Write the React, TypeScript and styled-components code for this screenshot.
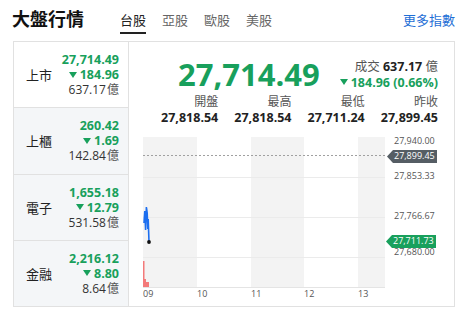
import styled, { createGlobalStyle } from 'styled-components'

const GREEN = '#18a05c'

const GlobalStyle = createGlobalStyle`
  body {
    margin: 0;
    background: #fff;
    font-family: "Open Sans", "Noto Sans CJK TC", sans-serif;
    color: #222;
  }
`

const markets = [
  { name: '上市', value: '27,714.49', change: '184.96', volume: '637.17' },
  { name: '上櫃', value: '260.42', change: '1.69', volume: '142.84' },
  { name: '電子', value: '1,655.18', change: '12.79', volume: '531.58' },
  { name: '金融', value: '2,216.12', change: '8.80', volume: '8.64' },
]

const stats = [
  { label: '開盤', value: '27,818.54' },
  { label: '最高', value: '27,818.54' },
  { label: '最低', value: '27,711.24' },
  { label: '昨收', value: '27,899.45' },
]

const tabs = ['台股', '亞股', '歐股', '美股']

export default function App() {
  return (
    <>
      <GlobalStyle />
      <Header>
        <Title>大盤行情</Title>
        <Tabs>
          {tabs.map((t, i) => (
            <Tab key={t} $active={i === 0}>{t}</Tab>
          ))}
        </Tabs>
        <MoreLink>更多指數</MoreLink>
      </Header>
      <Card>
        <MarketList>
          {markets.map((m, i) => (
            <MarketRow key={m.name} $active={i === 0}>
              <MarketName>{m.name}</MarketName>
              <MarketNumbers>
                <GreenLine>{m.value}</GreenLine>
                <GreenLine>
                  <Down />
                  {m.change}
                </GreenLine>
                <Volume>
                  {m.volume}
                  <Unit>億</Unit>
                </Volume>
              </MarketNumbers>
            </MarketRow>
          ))}
        </MarketList>
        <Detail>
          <Summary>
            <BigPrice>27,714.49</BigPrice>
            <SummarySide>
              <TradeLine>
                成交 <strong>637.17</strong> 億
              </TradeLine>
              <GreenLine>
                <Down />
                184.96 (0.66%)
              </GreenLine>
            </SummarySide>
          </Summary>
          <Stats>
            {stats.map((s) => (
              <Stat key={s.label}>
                <StatLabel>{s.label}</StatLabel>
                <StatValue>{s.value}</StatValue>
              </Stat>
            ))}
          </Stats>
          <Chart />
        </Detail>
      </Card>
    </>
  )
}

function Chart() {
  const bands = [
    { x: 0, w: 54, fill: '#f3f3f3' },
    { x: 54, w: 54, fill: '#fff' },
    { x: 108, w: 53, fill: '#f3f3f3' },
    { x: 161, w: 54, fill: '#fff' },
    { x: 215, w: 27, fill: '#f3f3f3' },
  ]
  const yLabels = [
    { t: '27,940.00', y: 9 },
    { t: '27,853.33', y: 44 },
    { t: '27,766.67', y: 84 },
    { t: '27,680.00', y: 120 },
  ]
  const xLabels = [
    { t: '09', x: 0 },
    { t: '10', x: 54 },
    { t: '11', x: 108 },
    { t: '12', x: 161 },
    { t: '13', x: 215 },
  ]
  return (
    <ChartBox>
      <svg width="294" height="168" viewBox="0 0 294 168">
        {bands.map((b) => (
          <rect key={b.x} x={b.x} y={4} width={b.w} height={150} fill={b.fill} />
        ))}
        {[44, 84, 124].map((y) => (
          <line key={y} x1={0} x2={242} y1={y + 0.5} y2={y + 0.5} stroke="#ebebeb" />
        ))}
        <line x1={0} x2={242} y1={154.5} y2={154.5} stroke="#e4e4e4" />
        <line x1={0} x2={242} y1={22.5} y2={22.5} stroke="#a0a0a0" strokeDasharray="2 2" />

        <path d="M0 128 L1.5 128 L1.5 146 L3 146 L3 149 L6 149 L6 154 L0 154 Z" fill="#f37a7a" />
        <polyline
          points="1,90 1.8,78 2.6,97 3.4,74 4.2,80 4.8,96 5.2,86 6,109"
          fill="none"
          stroke="#1d6ff0"
          strokeWidth="1.6"
        />
        <circle cx={6} cy={109} r={1.9} fill="#111" />

        {yLabels.map((l) => (
          <text key={l.t} x={251} y={l.y} fontSize="9" fill="#555" dominantBaseline="middle" fontFamily="Open Sans, sans-serif">
            {l.t}
          </text>
        ))}

        <polygon points="244,23.5 250,17 294,17 294,30 250,30" fill="#555d64" />
        <text x={251} y={24} fontSize="9" fill="#fff" dominantBaseline="middle" fontFamily="Open Sans, sans-serif">
          27,899.45
        </text>
        <polygon points="243,108.5 249,102 293,102 293,115 249,115" fill={GREEN} />
        <text x={250} y={109} fontSize="9" fill="#fff" dominantBaseline="middle" fontFamily="Open Sans, sans-serif">
          27,711.73
        </text>

        {xLabels.map((l) => (
          <text key={l.t} x={l.x} y={162} fontSize="9" fill="#555" dominantBaseline="middle" fontFamily="Open Sans, sans-serif">
            {l.t}
          </text>
        ))}
      </svg>
    </ChartBox>
  )
}

const Header = styled.header`
  display: flex;
  align-items: flex-start;
  height: 41px;
  padding: 0 10px 0 12px;
  box-sizing: border-box;
`

const Title = styled.h1`
  margin: 0;
  font-size: 18px;
  font-weight: bold;
  line-height: 38px;
  color: #111;
`

const Tabs = styled.nav`
  display: flex;
  gap: 16px;
  margin-left: 36px;
`

const Tab = styled.div<{ $active?: boolean }>`
  box-sizing: border-box;
  height: 34px;
  padding-top: 11px;
  font-size: 13px;
  line-height: 18px;
  color: ${(p) => (p.$active ? '#222' : '#666')};
  border-bottom: 2px solid ${(p) => (p.$active ? '#222' : 'transparent')};
  cursor: pointer;
`

const MoreLink = styled.a`
  margin-left: auto;
  padding-top: 11px;
  font-size: 13px;
  line-height: 18px;
  color: #1f6fd6;
  cursor: pointer;
`

const Card = styled.main`
  display: grid;
  grid-template-columns: 115px 1fr;
  width: 442px;
  height: 266px;
  margin-left: 13px;
  box-sizing: border-box;
  border: 1px solid #e1e1e1;
`

const MarketList = styled.div`
  display: flex;
  flex-direction: column;
  border-right: 1px solid #e1e1e1;
`

const MarketRow = styled.div<{ $active?: boolean }>`
  flex: 1;
  display: flex;
  align-items: center;
  justify-content: space-between;
  padding: 0 9px 0 12px;
  background: ${(p) => (p.$active ? '#fff' : '#f4f6f8')};
  border-bottom: 1px solid #e1e1e1;

  &:last-child {
    border-bottom: none;
  }
`

const MarketName = styled.span`
  font-size: 13px;
  color: #222;
`

const MarketNumbers = styled.div`
  display: flex;
  flex-direction: column;
  align-items: flex-end;
`

const GreenLine = styled.div`
  display: flex;
  align-items: center;
  gap: 3px;
  font-size: 12.5px;
  line-height: 15px;
  font-weight: bold;
  color: ${GREEN};
`

const Down = styled.span`
  width: 0;
  height: 0;
  border-left: 4px solid transparent;
  border-right: 4px solid transparent;
  border-top: 6px solid ${GREEN};
`

const Volume = styled.div`
  font-size: 12px;
  line-height: 15px;
  color: #333;
`

const Unit = styled.span`
  margin-left: 1px;
  color: #555;
`

const Detail = styled.section`
  display: flex;
  flex-direction: column;
  padding: 12px 16px 0 15px;
`

const Summary = styled.div`
  display: flex;
  justify-content: flex-end;
  align-items: center;
  gap: 20px;
  height: 40px;
`

const BigPrice = styled.div`
  font-size: 31px;
  font-weight: bold;
  line-height: 40px;
  color: ${GREEN};
`

const SummarySide = styled.div`
  display: flex;
  flex-direction: column;
  align-items: flex-end;
  gap: 1px;
`

const TradeLine = styled.div`
  font-size: 12.5px;
  line-height: 15px;
  color: #555;

  strong {
    color: #222;
  }
`

const Stats = styled.div`
  display: grid;
  grid-template-columns: repeat(4, 1fr);
  margin-left: 1px;
`

const Stat = styled.div`
  display: flex;
  flex-direction: column;
  align-items: flex-end;
`

const StatLabel = styled.span`
  font-size: 12px;
  line-height: 16px;
  color: #555;
`

const StatValue = styled.span`
  font-size: 12.5px;
  line-height: 16px;
  font-weight: bold;
  color: #222;
`

const ChartBox = styled.div`
  margin-top: 7px;
  margin-left: -1px;
  height: 168px;

  svg {
    display: block;
  }
`
